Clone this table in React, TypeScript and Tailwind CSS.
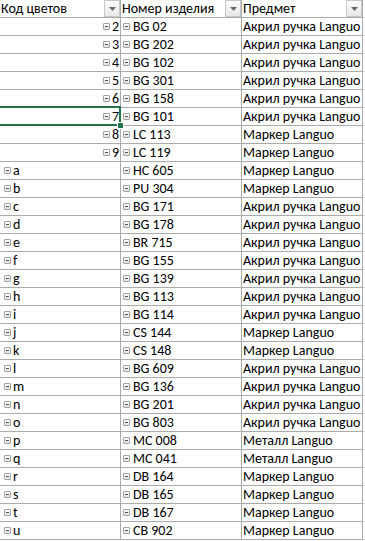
import React from "react";

type Row = { k: string; num: boolean; code: string; item: string };

const A = "Акрил ручка Languo";
const M = "Маркер Languo";
const ME = "Металл Languo";

const rows: Row[] = [
  { k: "2", num: true, code: "BG 02", item: A },
  { k: "3", num: true, code: "BG 202", item: A },
  { k: "4", num: true, code: "BG 102", item: A },
  { k: "5", num: true, code: "BG 301", item: A },
  { k: "6", num: true, code: "BG 158", item: A },
  { k: "7", num: true, code: "BG 101", item: A },
  { k: "8", num: true, code: "LC 113", item: M },
  { k: "9", num: true, code: "LC 119", item: M },
  { k: "a", num: false, code: "HC 605", item: M },
  { k: "b", num: false, code: "PU 304", item: M },
  { k: "c", num: false, code: "BG 171", item: A },
  { k: "d", num: false, code: "BG 178", item: A },
  { k: "e", num: false, code: "BR 715", item: A },
  { k: "f", num: false, code: "BG 155", item: A },
  { k: "g", num: false, code: "BG 139", item: A },
  { k: "h", num: false, code: "BG 113", item: A },
  { k: "i", num: false, code: "BG 114", item: A },
  { k: "j", num: false, code: "CS 144", item: M },
  { k: "k", num: false, code: "CS 148", item: M },
  { k: "l", num: false, code: "BG 609", item: A },
  { k: "m", num: false, code: "BG 136", item: A },
  { k: "n", num: false, code: "BG 201", item: A },
  { k: "o", num: false, code: "BG 803", item: A },
  { k: "p", num: false, code: "MC 008", item: ME },
  { k: "q", num: false, code: "MC 041", item: ME },
  { k: "r", num: false, code: "DB 164", item: M },
  { k: "s", num: false, code: "DB 165", item: M },
  { k: "t", num: false, code: "DB 167", item: M },
  { k: "u", num: false, code: "CB 902", item: M },
];

function Collapse() {
  return (
    <span className="inline-flex h-[7px] w-[7px] shrink-0 items-center justify-center rounded-[1px] border border-[#a3a3a3] bg-gradient-to-b from-white to-[#e2e2e2]">
      <span className="block h-[1px] w-[3px] bg-[#505050]" />
    </span>
  );
}

function Drop() {
  return (
    <span className="flex h-[17px] w-[16px] shrink-0 items-center justify-center border border-[#c8c8c8] bg-gradient-to-b from-[#fbfbfb] to-[#e8e8e8]">
      <svg width="7" height="4" viewBox="0 0 7 4">
        <path d="M0 0 H7 L3.5 4 Z" fill="#6a6a6a" />
      </svg>
    </span>
  );
}

const cell = "h-[18px] border-b border-r border-[#ababab] flex items-center overflow-hidden whitespace-nowrap";

export default function App() {
  return (
    <div
      className="relative h-[541px] w-[365px] overflow-hidden bg-white text-[14px] leading-[17px] text-black"
      style={{ fontFamily: "Carlito, Calibri, Roboto, sans-serif" }}
    >
      <div className="grid grid-cols-[121px_121px_121px_2px]">
        <div className={`${cell} justify-between pl-[1px]`}>
          <span>Код цветов</span>
          <Drop />
        </div>
        <div className={`${cell} justify-between pl-[1px]`}>
          <span>Номер изделия</span>
          <Drop />
        </div>
        <div className={`${cell} justify-between pl-[1px]`}>
          <span>Предмет</span>
          <Drop />
        </div>
        <div className="h-[18px] border-b border-[#d4d4d4]" />
        {rows.map((r) => (
          <React.Fragment key={r.k}>
            {r.num ? (
              <div className={`${cell} justify-end gap-[2px] pr-[1px]`}>
                <Collapse />
                <span>{r.k}</span>
              </div>
            ) : (
              <div className={`${cell} gap-[2px] pl-[4px]`}>
                <Collapse />
                <span>{r.k}</span>
              </div>
            )}
            <div className={`${cell} gap-[3px] pl-[2px]`}>
              <Collapse />
              <span>{r.code}</span>
            </div>
            <div className={`${cell} pl-[1px]`}>
              <span>{r.item}</span>
            </div>
            <div className="h-[18px] border-b border-[#d4d4d4]" />
          </React.Fragment>
        ))}
      </div>
      <div className="pointer-events-none absolute left-[-2px] top-[106px] h-[20px] w-[123px] border-2 border-[#217346]" />
      <div className="pointer-events-none absolute left-[117px] top-[122px] h-[7px] w-[7px] border border-white bg-[#217346]" />
    </div>
  );
}
